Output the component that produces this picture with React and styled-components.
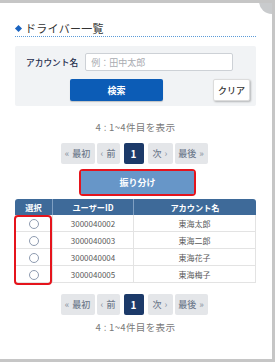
import React from "react";
import styled, { createGlobalStyle } from "styled-components";

const GlobalStyle = createGlobalStyle`
  html, body {
    margin: 0;
    padding: 0;
    background: #ffffff;
  }
  body {
    font-family: "Noto Sans CJK JP", "Noto Sans", sans-serif;
  }
`;

const Frame = styled.div`
  position: relative;
  box-sizing: border-box;
  width: 275px;
  height: 362px;
  border-top: 3px solid #c6c6c6;
  border-right: 3px solid #c6c6c6;
  border-bottom: 3px solid #c6c6c6;
  padding: 17px 16px 0 15px;
  overflow: hidden;
  background: #ffffff;
`;

const CornerButton = styled.div`
  position: absolute;
  right: -13px;
  top: -15px;
  width: 26px;
  height: 26px;
  border-radius: 50%;
  background: #c9cbcd;
`;

const Title = styled.h2`
  margin: 0;
  display: flex;
  align-items: center;
  gap: 2px;
  height: 16px;
  border-bottom: 1px dotted #5b9bd8;
  font-size: 11px;
  font-weight: 400;
  line-height: 14px;
  color: #333333;
  letter-spacing: 0.3px;
`;

const Diamond = styled.span`
  display: inline-block;
  width: 5px;
  height: 5px;
  margin: 0 2px 0 1px;
  background: #1a63c0;
  transform: rotate(45deg);
`;

const SearchBox = styled.div`
  margin-top: 9px;
  height: 60px;
  box-sizing: border-box;
  padding: 7px 6px 5px 11px;
  background: #f1f3f5;
  border-radius: 2px;
  display: flex;
  flex-direction: column;
  gap: 8px;
`;

const FieldRow = styled.div`
  display: flex;
  align-items: center;
  gap: 7px;
`;

const Label = styled.label`
  font-size: 8.7px;
  font-weight: 500;
  color: #1f2d4d;
  white-space: nowrap;
`;

const Input = styled.input`
  box-sizing: border-box;
  width: 148px;
  height: 18px;
  padding: 0 5px;
  border: 1px solid #cdd1d6;
  border-radius: 2px;
  background: #ffffff;
  font-family: inherit;
  font-size: 9px;
  color: #333;
  outline: none;
  &::placeholder {
    color: #a9acb1;
  }
`;

const ButtonRow = styled.div`
  display: flex;
  align-items: center;
  padding-left: 44px;
`;

const PrimaryButton = styled.button`
  width: 93px;
  height: 22px;
  border: none;
  border-radius: 2px;
  background: #0c5cb6;
  color: #ffffff;
  font-family: inherit;
  font-size: 9px;
  font-weight: 700;
  box-shadow: 0 1px 1px rgba(0, 0, 0, 0.2);
`;

const ClearButton = styled.button`
  margin-left: auto;
  width: 37px;
  height: 22px;
  padding: 0;
  border: 1px solid #dcdcdc;
  border-radius: 2px;
  background: #ffffff;
  color: #333333;
  font-family: inherit;
  font-size: 9px;
  font-weight: 500;
  box-shadow: 1px 1px 2px rgba(0, 0, 0, 0.25);
`;

const Count = styled.div`
  margin-top: ${(p) => p.$top}px;
  text-align: center;
  font-size: 9.6px;
  line-height: 12px;
  color: #7a7a7a;
  letter-spacing: 0.3px;
`;

const Pager = styled.div`
  margin-top: ${(p) => p.$top}px;
  display: flex;
  justify-content: center;
  gap: 2px;
  padding-right: 3px;
`;

const PageButton = styled.span`
  box-sizing: border-box;
  display: flex;
  align-items: center;
  justify-content: center;
  gap: 3px;
  height: 21px;
  width: ${(p) => p.$w}px;
  margin: 0 ${(p) => (p.$active ? 2 : 0)}px;
  border-radius: 2px;
  background: ${(p) => (p.$active ? "#1c3a69" : "#e4e6e9")};
  color: ${(p) => (p.$active ? "#ffffff" : "#707c8d")};
  font-size: ${(p) => (p.$active ? 10 : 9)}px;
  font-weight: ${(p) => (p.$active ? 700 : 500)};
`;

const Arrow = styled.span`
  font-size: 9px;
  color: #8d96a3;
`;

const Highlight = styled.div`
  box-sizing: border-box;
  border: 2px solid #e5141c;
  border-radius: 4px;
`;

const DistributeWrap = styled(Highlight)`
  margin: 5px auto 0;
  width: 117px;
  position: relative;
  left: 2px;
`;

const DistributeButton = styled.button`
  display: block;
  width: 113px;
  height: 23px;
  border: none;
  border-radius: 1px;
  background: #6796c8;
  color: #ffffff;
  font-family: inherit;
  font-size: 9px;
  font-weight: 700;
`;

const TableWrap = styled.div`
  position: relative;
  margin-top: 3px;
`;

const Table = styled.table`
  width: 241px;
  border-collapse: separate;
  border-spacing: 0;
  font-size: 8px;
  color: #5a5a5a;
`;

const Th = styled.th`
  height: 16px;
  padding: 0;
  background: #3e6a99;
  color: #ffffff;
  font-weight: 700;
  font-size: 8.2px;
  border-left: 1px solid #7f9fc2;
  &:first-child {
    border-left: none;
    border-top-left-radius: 3px;
  }
  &:last-child {
    border-top-right-radius: 3px;
  }
`;

const Td = styled.td`
  height: 16px;
  padding: 0;
  text-align: center;
  border-bottom: 1px solid #e3e3e3;
  border-left: 1px solid #e3e3e3;
  &:last-child {
    border-right: 1px solid #e3e3e3;
  }
`;

const Radio = styled.span`
  display: inline-block;
  box-sizing: border-box;
  width: 10px;
  height: 10px;
  border: 1px solid #8e9bb0;
  border-radius: 50%;
  background: #ffffff;
  vertical-align: middle;
`;

const ColumnMark = styled(Highlight)`
  position: absolute;
  left: -1px;
  top: 16px;
  width: 38px;
  height: 70px;
`;

const pages = [
  { w: 34, label: "最初", pre: "«" },
  { w: 23, label: "前", pre: "‹" },
  { w: 20, label: "1", active: true },
  { w: 25, label: "次", post: "›" },
  { w: 33, label: "最後", post: "»" },
];

const users = [
  { id: "3000040002", name: "東海太郎" },
  { id: "3000040003", name: "東海二郎" },
  { id: "3000040004", name: "東海花子" },
  { id: "3000040005", name: "東海梅子" },
];

const Pagination = ({ top }) => (
  <Pager $top={top}>
    {pages.map((p) => (
      <PageButton key={p.label} $w={p.w} $active={p.active}>
        {p.pre && <Arrow>{p.pre}</Arrow>}
        {p.label}
        {p.post && <Arrow>{p.post}</Arrow>}
      </PageButton>
    ))}
  </Pager>
);

const App = () => {
  return (
    <>
      <GlobalStyle />
      <Frame>
        <CornerButton />
        <Title>
          <Diamond />
          ドライバー一覧
        </Title>
        <SearchBox>
          <FieldRow>
            <Label>アカウント名</Label>
            <Input placeholder="例：田中太郎" />
          </FieldRow>
          <ButtonRow>
            <PrimaryButton>検索</PrimaryButton>
            <ClearButton>クリア</ClearButton>
          </ButtonRow>
        </SearchBox>
        <Count $top={15}>4 : 1~4件目を表示</Count>
        <Pagination top={10} />
        <DistributeWrap>
          <DistributeButton>振り分け</DistributeButton>
        </DistributeWrap>
        <TableWrap>
          <Table>
            <colgroup>
              <col style={{ width: 37 }} />
              <col style={{ width: 81 }} />
              <col />
            </colgroup>
            <thead>
              <tr>
                <Th>選択</Th>
                <Th>ユーザーID</Th>
                <Th>アカウント名</Th>
              </tr>
            </thead>
            <tbody>
              {users.map((u) => (
                <tr key={u.id}>
                  <Td>
                    <Radio />
                  </Td>
                  <Td>{u.id}</Td>
                  <Td>{u.name}</Td>
                </tr>
              ))}
            </tbody>
          </Table>
          <ColumnMark />
        </TableWrap>
        <Pagination top={11} />
        <Count $top={6}>4 : 1~4件目を表示</Count>
      </Frame>
    </>
  );
};

export default App;
